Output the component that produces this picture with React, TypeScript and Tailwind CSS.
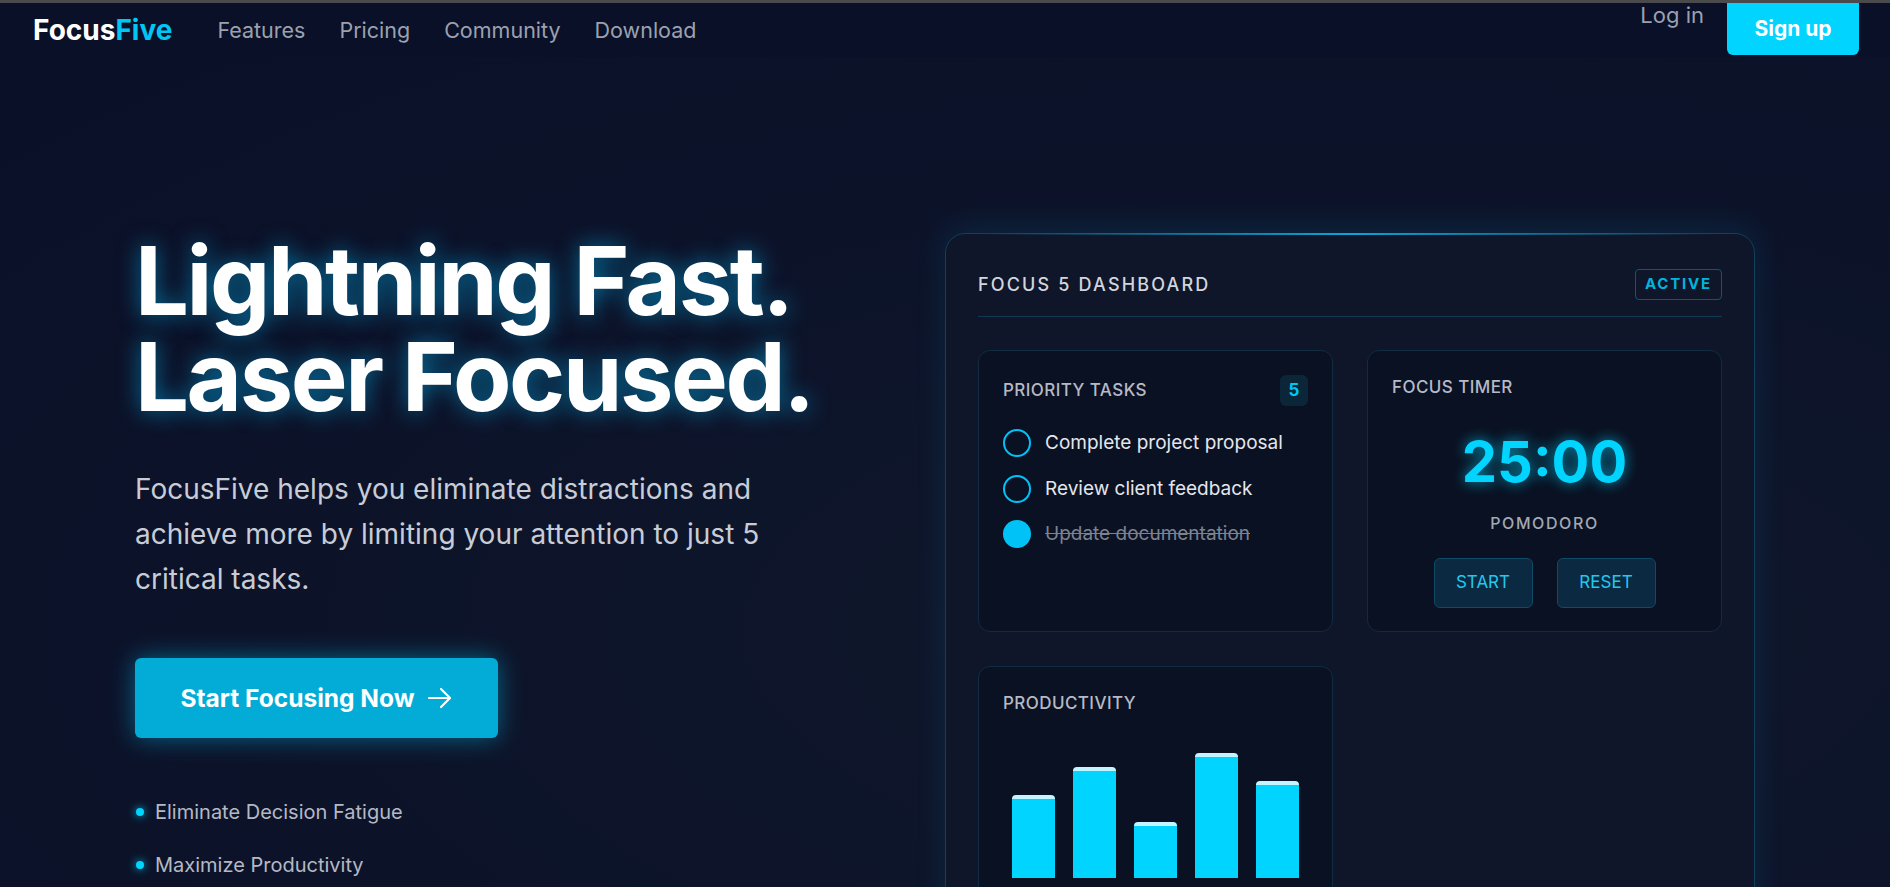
const navLinks = ["Features", "Pricing", "Community", "Download"];

const tasks = [
  { label: "Complete project proposal", done: false },
  { label: "Review client feedback", done: false },
  { label: "Update documentation", done: true },
];

const bars = [60, 80, 40, 90, 70];

function Header() {
  return (
    <header className="flex items-start justify-between pl-[33px] pr-[31px]">
      <div className="flex h-[54px] items-center">
        <a className="text-[28px] font-bold text-white">
          Focus<span className="text-[#00c6f4]">Five</span>
        </a>
        <nav className="ml-[45px] flex items-center gap-[34px] text-[21.5px] text-[#9ba1af]">
          {navLinks.map((link) => (
            <a key={link}>{link}</a>
          ))}
        </nav>
      </div>
      <div className="flex items-start gap-[23px]">
        <a className="-mt-[4px] text-[22px] text-[#9ba1af]">Log in</a>
        <button className="h-[52px] w-[132px] rounded-b-md bg-[#00d4ff] text-[21px] font-bold text-white">
          Sign up
        </button>
      </div>
    </header>
  );
}

function Arrow() {
  return (
    <svg width="26" height="22" viewBox="0 0 26 22" fill="none" stroke="currentColor" strokeWidth="2.2" strokeLinecap="round" strokeLinejoin="round">
      <path d="M2 11h21" />
      <path d="M14 2l9 9-9 9" />
    </svg>
  );
}

function Hero() {
  return (
    <div>
      <h1 className="text-[95.5px] font-bold leading-none tracking-tight text-white [text-shadow:0_0_22px_rgba(0,190,255,0.55)]">
        Lightning Fast.
        <br />
        Laser Focused.
      </h1>
      <p className="mt-[43px] max-w-[640px] text-[28px] leading-[1.6] text-[#c8ccd6]">
        FocusFive helps you eliminate distractions and achieve more by limiting your attention to just 5
        critical tasks.
      </p>
      <button className="mt-[57px] flex h-[80px] w-[363px] items-center justify-center gap-[12px] rounded-md bg-[#03acd6] text-[24.5px] font-bold text-white shadow-[0_0_24px_rgba(0,200,255,0.45)]">
        Start Focusing Now
        <Arrow />
      </button>
      <ul className="mt-[60px] space-y-[25px] text-[20px] text-[#b5b9c5]">
        {["Eliminate Decision Fatigue", "Maximize Productivity"].map((item) => (
          <li key={item} className="flex h-[28px] items-center gap-[11px] pl-[1px]">
            <span className="h-2 w-2 rounded-full bg-[#00d4ff] shadow-[0_0_8px_rgba(0,212,255,0.9)]" />
            {item}
          </li>
        ))}
      </ul>
    </div>
  );
}

function PriorityTasks() {
  return (
    <div className="rounded-xl border border-[#112c42] bg-[#0a1122] p-6">
      <div className="flex items-center justify-between">
        <h3 className="text-[17px] font-medium tracking-wide text-[#b6bac6]">PRIORITY TASKS</h3>
        <span className="flex h-[31px] w-[28px] items-center justify-center rounded-md bg-[#0b2638] text-[17px] font-bold text-[#00c6f4]">
          5
        </span>
      </div>
      <ul className="mt-[23px] space-y-[17px]">
        {tasks.map((task) => (
          <li key={task.label} className="flex items-center gap-[14px]">
            {task.done ? (
              <span className="h-7 w-7 rounded-full bg-[#00c2f7]" />
            ) : (
              <span className="h-7 w-7 rounded-full border-2 border-[#00c2f7]" />
            )}
            <span
              className={
                task.done
                  ? "text-[19px] text-[#7d8290] line-through"
                  : "text-[19px] text-[#e4e6ec]"
              }
            >
              {task.label}
            </span>
          </li>
        ))}
      </ul>
    </div>
  );
}

function FocusTimer() {
  return (
    <div className="flex flex-col rounded-xl border border-[#112c42] bg-[#0a1122] p-6 pb-[23px]">
      <h3 className="text-[17px] font-medium leading-6 tracking-wide text-[#b6bac6]">FOCUS TIMER</h3>
      <div className="mt-[35px] text-center text-[56px] font-bold leading-none text-[#00d4ff] [text-shadow:0_0_14px_rgba(0,212,255,0.7)]">
        25:00
      </div>
      <div className="mt-[21px] text-center text-[16px] font-medium leading-6 tracking-widest text-[#a3a8b4]">
        POMODORO
      </div>
      <div className="mt-[23px] flex justify-center gap-6">
        <button className="h-[50px] w-[99px] rounded-md border border-[#0f4a66] bg-[#0b2940] text-[17px] text-[#22c8f0]">
          START
        </button>
        <button className="h-[50px] w-[99px] rounded-md border border-[#0f4a66] bg-[#0b2940] text-[17px] text-[#22c8f0]">
          RESET
        </button>
      </div>
    </div>
  );
}

function Productivity() {
  return (
    <div className="rounded-xl border border-[#112c42] bg-[#0a1122] p-6">
      <h3 className="text-[17px] font-medium leading-6 tracking-wide text-[#b6bac6]">PRODUCTIVITY</h3>
      <div className="mt-[24px] flex h-[139px] items-end justify-around">
        {bars.map((value, i) => (
          <div
            key={i}
            className="w-[43px] rounded-t-sm border-t-4 border-[#c4f4ff] bg-[#00d4ff]"
            style={{ height: `${value}%` }}
          />
        ))}
      </div>
    </div>
  );
}

function Dashboard() {
  return (
    <div className="relative rounded-[20px] border border-[#10405a] bg-[#0f1629] px-8 pb-8 pt-[35px] shadow-[0_-6px_30px_rgba(0,170,230,0.12)]">
      <div className="absolute -top-px left-[40px] right-[40px] h-[2px] bg-gradient-to-r from-transparent via-[#0aa6d8] to-transparent" />
      <div className="flex items-center justify-between border-b border-[#0f3b52] pb-4">
        <h2 className="text-[18px] font-medium tracking-[0.12em] text-[#d2d5dd]">FOCUS 5 DASHBOARD</h2>
        <span className="flex h-[31px] items-center rounded border border-[#0d5674] px-[9px] text-[15px] font-bold tracking-[0.12em] text-[#00b4dc]">
          ACTIVE
        </span>
      </div>
      <div className="mt-[33px] grid grid-cols-2 gap-[34px]">
        <PriorityTasks />
        <FocusTimer />
        <Productivity />
      </div>
    </div>
  );
}

export default function App() {
  return (
    <div className="min-h-screen overflow-hidden bg-[#0a1028] font-['Inter',sans-serif]">
      <div className="h-[3px] bg-[#4a4a4c]" />
      <Header />
      <main className="bg-[radial-gradient(ellipse_at_70%_60%,#10182c_0%,#0c1329_60%,#0a1028_100%)] px-[135px] pb-20">
        <div className="grid grid-cols-2 items-start pt-[176px]">
          <Hero />
          <Dashboard />
        </div>
      </main>
    </div>
  );
}
